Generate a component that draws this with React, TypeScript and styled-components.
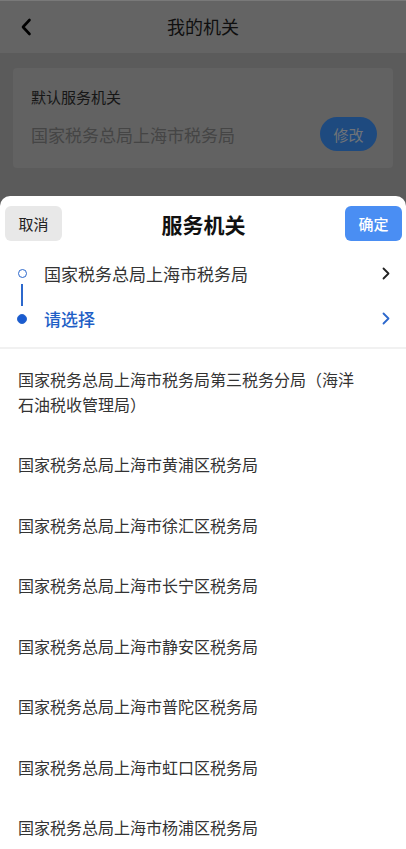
import React from 'react';
import styled, { createGlobalStyle } from 'styled-components';

const GlobalStyle = createGlobalStyle`
  html, body {
    margin: 0;
    padding: 0;
    height: 100%;
    overflow: hidden;
    font-family: "Noto Sans CJK SC", "Noto Sans", sans-serif;
  }
  #root {
    height: 100%;
  }
`;

const Page = styled.div`
  position: relative;
  height: 849px;
  background: #b7b7b7;
  overflow: hidden;
`;

const NavBar = styled.div`
  height: 53px;
  display: grid;
  grid-template-columns: 53px 1fr 53px;
  align-items: center;
  background: #c8c8c8;
  border-top: 1px solid #f2f2f2;
  box-sizing: border-box;
`;

const BackButton = styled.button`
  border: none;
  background: none;
  padding: 0 0 0 20px;
  display: flex;
  align-items: center;
  height: 100%;
`;

const NavTitle = styled.h1`
  margin: 0 0 2px;
  text-align: center;
  font-size: 18px;
  font-weight: 400;
  color: #1e1e1e;
`;

const Content = styled.div`
  padding: 15px 13px;
`;

const Card = styled.div`
  background: #c4c4c4;
  border-radius: 4px;
  padding: 18px 16px 17px 18px;
`;

const CardLabel = styled.div`
  font-size: 15px;
  line-height: 22px;
  color: #2e2e2e;
`;

const CardRow = styled.div`
  display: flex;
  align-items: center;
  justify-content: space-between;
  margin-top: 9px;
`;

const CardValue = styled.div`
  font-size: 17px;
  color: #8a8a8a;
`;

const EditButton = styled.button`
  width: 57px;
  height: 34px;
  border: none;
  border-radius: 17px;
  background: #3d94ff;
  color: #dfe6f0;
  font-family: inherit;
  font-size: 15px;
`;

const Mask = styled.div`
  position: absolute;
  inset: 0;
  background: rgba(0, 0, 0, 0.5);
`;

const Sheet = styled.div`
  position: absolute;
  top: 196px;
  left: 0;
  right: 0;
  bottom: 0;
  background: #fff;
  border-radius: 10px 10px 0 0;
  overflow: hidden;
`;

const SheetHeader = styled.div`
  display: flex;
  align-items: center;
  justify-content: space-between;
  padding: 10px 4px 10px 5px;
`;

const SheetButton = styled.button<{ $primary?: boolean }>`
  width: 57px;
  height: 35px;
  border: none;
  border-radius: 6px;
  background: ${p => (p.$primary ? '#4a8ef3' : '#e8e8e8')};
  color: ${p => (p.$primary ? '#ffffff' : '#222222')};
  font-family: inherit;
  font-size: 15px;
  font-weight: ${p => (p.$primary ? 500 : 400)};
`;

const SheetTitle = styled.div`
  font-size: 21px;
  font-weight: 700;
  color: #111;
`;

const Steps = styled.div`
  padding-bottom: 6px;
  border-bottom: 2px solid #f1f1f1;
`;

const Step = styled.div<{ $active?: boolean; $connected?: boolean }>`
  position: relative;
  height: 45px;
  display: flex;
  align-items: center;
  padding-right: 16px;
  color: ${p => (p.$active ? '#1f5fc6' : '#333333')};
  font-weight: ${p => (p.$active ? 500 : 400)};

  &::after {
    content: '';
    display: ${p => (p.$connected ? 'block' : 'none')};
    position: absolute;
    left: 21px;
    top: 33px;
    width: 1.5px;
    height: 22px;
    background: #2c68cc;
  }
`;

const Marker = styled.div`
  width: 44px;
  display: flex;
  justify-content: center;
`;

const Dot = styled.span<{ $filled?: boolean }>`
  width: ${p => (p.$filled ? 10 : 9)}px;
  height: ${p => (p.$filled ? 10 : 9)}px;
  box-sizing: border-box;
  border-radius: 50%;
  border: 1.5px solid #2c68cc;
  background: ${p => (p.$filled ? '#1a5bd0' : '#fff')};
`;

const StepText = styled.div`
  flex: 1;
  font-size: 17px;
`;

const Options = styled.div``;

const Option = styled.div`
  padding: 17.75px 50px 17.75px 18px;
  font-size: 16px;
  line-height: 25px;
  color: #333;
`;

const Chevron: React.FC<{ color: string }> = ({ color }) => (
  <svg width="8" height="13" viewBox="0 0 8 13">
    <polyline points="1.5,1.5 6.5,6.5 1.5,11.5" fill="none" stroke={color} strokeWidth="1.8" strokeLinecap="round" strokeLinejoin="round" />
  </svg>
);

const offices = [
  '国家税务总局上海市税务局第三税务分局（海洋石油税收管理局）',
  '国家税务总局上海市黄浦区税务局',
  '国家税务总局上海市徐汇区税务局',
  '国家税务总局上海市长宁区税务局',
  '国家税务总局上海市静安区税务局',
  '国家税务总局上海市普陀区税务局',
  '国家税务总局上海市虹口区税务局',
  '国家税务总局上海市杨浦区税务局',
];

export default function App() {
  return (
    <>
      <GlobalStyle />
      <Page>
        <NavBar>
          <BackButton>
            <svg width="12" height="18" viewBox="0 0 12 18">
              <polyline points="9.5,2 3,9 9.5,16" fill="none" stroke="#000" strokeWidth="2.6" strokeLinecap="round" strokeLinejoin="round" />
            </svg>
          </BackButton>
          <NavTitle>我的机关</NavTitle>
          <div />
        </NavBar>
        <Content>
          <Card>
            <CardLabel>默认服务机关</CardLabel>
            <CardRow>
              <CardValue>国家税务总局上海市税务局</CardValue>
              <EditButton>修改</EditButton>
            </CardRow>
          </Card>
        </Content>

        <Mask />

        <Sheet>
          <SheetHeader>
            <SheetButton>取消</SheetButton>
            <SheetTitle>服务机关</SheetTitle>
            <SheetButton $primary>确定</SheetButton>
          </SheetHeader>
          <Steps>
            <Step $connected>
              <Marker>
                <Dot />
              </Marker>
              <StepText>国家税务总局上海市税务局</StepText>
              <Chevron color="#222" />
            </Step>
            <Step $active>
              <Marker>
                <Dot $filled />
              </Marker>
              <StepText>请选择</StepText>
              <Chevron color="#2c68cc" />
            </Step>
          </Steps>
          <Options>
            {offices.map(name => (
              <Option key={name}>{name}</Option>
            ))}
          </Options>
        </Sheet>
      </Page>
    </>
  );
}
